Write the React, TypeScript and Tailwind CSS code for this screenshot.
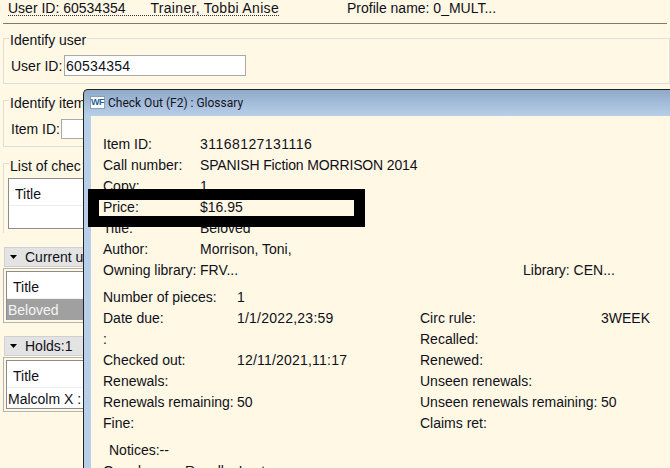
const Row = ({ a, b, w = "w-[97px]", bc = "" }: { a: string; b?: string; w?: string; bc?: string }) => (
  <div className="flex h-[21px] items-center whitespace-nowrap">
    <span className={`${w} shrink-0`}>{a}</span>
    <span className={bc}>{b}</span>
  </div>
);

const Caret = () => (
  <svg width="8" height="4" viewBox="0 0 8 4" className="ml-[5px] mr-[7px] shrink-0">
    <path d="M0 0h7L3.5 4z" fill="#000" />
  </svg>
);

const Section = ({ title, row, selected, mt }: { title: string; row: string; selected?: boolean; mt: string }) => (
  <div className={`${mt} w-[90px]`}>
    <div className="ml-[1px] flex h-[20px] items-center border border-[#d0d0d0] bg-[#e3e3e3] whitespace-nowrap overflow-hidden">
      <Caret />
      <span>{title}</span>
    </div>
    <div className="mt-[1px] h-[55px] border border-[#b4b4b4] p-[2px]">
      <div className="h-full border border-[#8c8c8c] bg-white">
        <div className="flex h-[27px] items-center border-b border-[#eeeeee] pl-[6px] pt-[3px]">Title</div>
        <div className={`flex h-[21px] items-center whitespace-nowrap pl-[1px] ${selected ? "bg-[#a0a0a0] text-[#f4f4f4]" : ""}`}>{row}</div>
      </div>
    </div>
  </div>
);

export default function App() {
  return (
    <div className="relative h-[468px] w-[670px] overflow-hidden bg-[#fff8e5] text-[14px] leading-none text-[#101018] font-['Liberation_Sans',Arial,sans-serif]">
      <div className="mx-[3px] flex h-[24px] items-start border-b border-[#7f7a70] pl-[5px] pt-[1px]">
        <div className="flex h-[15px] w-[271px] items-center border-b border-dotted border-[#333] whitespace-nowrap">
          <span className="w-[143px]">User ID: 60534354</span>
          <span className="tracking-[0.32px]">Trainer, Tobbi Anise</span>
        </div>
        <span className="ml-[68px] whitespace-nowrap">Profile name: 0_MULT...</span>
      </div>

      <div className="pl-[3px]">
        <fieldset className="relative mt-[14px] h-[46px] border border-[#e0dcd8]">
          <legend className="sr-only">Identify user</legend>
          <span className="absolute left-[5px] top-[-6px] bg-[#fff8e5] px-[1px]">Identify user</span>
          <div className="flex items-center pl-[7px] pt-[16px]">
            <span className="w-[53px]">User ID:</span>
            <div className="flex h-[21px] w-[182px] items-center border border-[#a9a9a9] bg-white pl-[1px] tracking-[0.25px]">60534354</div>
          </div>
        </fieldset>

        <fieldset className="relative mt-[16px] h-[47px] border border-[#e0dcd8]">
          <legend className="sr-only">Identify item</legend>
          <span className="absolute left-[5px] top-[-5px] bg-[#fff8e5] px-[1px] whitespace-nowrap">Identify item</span>
          <div className="flex items-center pl-[7px] pt-[18px]">
            <span className="w-[50px]">Item ID:</span>
            <div className="h-[20px] w-[60px] border border-[#a9a9a9] bg-white" />
          </div>
        </fieldset>

        <fieldset className="relative mt-[16px] h-[70px] w-[90px] border-l border-t border-[#e0dcd8]">
          <legend className="sr-only">List of checkouts</legend>
          <span className="absolute left-[5px] top-[-5px] bg-[#fff8e5] px-[1px] whitespace-nowrap">List of chec</span>
          <div className="ml-[4px] mt-[14px] h-[51px] border border-[#8c8c8c] bg-white">
            <div className="flex h-[27px] items-center border-b border-[#eeeeee] pl-[6px] pt-[3px]">Title</div>
          </div>
        </fieldset>

        <Section mt="mt-[14px]" title="Current u" row="Beloved" selected />
        <Section mt="mt-[13px]" title="Holds:1" row="Malcolm X : " />
      </div>

      <div className="absolute left-[83px] top-[89px] h-[400px] w-[600px] rounded-tl-[5px] border-l border-t border-[#222] bg-[linear-gradient(#8fa9c9_0px,#b8cfe9_26px)] pl-[7px] pt-[26px]">
        <div className="absolute left-[6px] top-[6px] flex h-[13px] w-[15px] items-center justify-center border border-[#8aa0b8] bg-white text-[9px] font-bold tracking-[-0.5px] text-[#1f5f98]">WF</div>
        <div className="absolute left-[24px] top-[6px] whitespace-nowrap text-[12px] leading-[15px] font-['Roboto',sans-serif] text-[#14141c]">Check Out (F2) : Glossary</div>

        <div className="h-full bg-[#fff8e5] pl-[12px] pt-[17px]">
          <Row a="Item ID:" b="31168127131116" bc="tracking-[0.45px]" />
          <Row a="Call number:" b="SPANISH Fiction MORRISON 2014" bc="tracking-[-0.14px]" />
          <Row a="Copy:" b="1" />
          <Row a="Price:" b="$16.95" />
          <Row a="Title:" b="Beloved" />
          <Row a="Author:" b="Morrison, Toni," />
          <div className="flex h-[21px] items-center whitespace-nowrap">
            <span className="w-[97px]">Owning library:</span>
            <span className="w-[323px]">FRV...</span>
            <span>Library: CEN...</span>
          </div>

          <div className="mt-[6px] flex">
            <div className="w-[317px]">
              <Row a="Number of pieces:" b="1" w="w-[134px]" />
              <Row a="Date due:" b="1/1/2022,23:59" w="w-[134px]" bc="tracking-[0.22px]" />
              <Row a=":" w="w-[134px]" />
              <Row a="Checked out:" b="12/11/2021,11:17" w="w-[134px]" bc="tracking-[0.2px]" />
              <Row a="Renewals:" w="w-[134px]" />
              <Row a="Renewals remaining:" b="50" w="w-[134px]" />
              <Row a="Fine:" w="w-[134px]" />
            </div>
            <div>
              <div className="h-[21px]" />
              <Row a="Circ rule:" b="3WEEK" w="w-[181px]" />
              <Row a="Recalled:" w="w-[181px]" />
              <Row a="Renewed:" w="w-[181px]" />
              <Row a="Unseen renewals:" w="w-[181px]" />
              <Row a="Unseen renewals remaining:" b="50" w="w-[181px]" />
              <Row a="Claims ret:" w="w-[181px]" />
            </div>
          </div>

          <div className="mt-[6px] flex h-[21px] items-center pl-[6px]">Notices:--</div>
          <div className="flex h-[21px] items-center whitespace-nowrap">
            <span className="w-[82px]">Overdues:</span>
            <span>Recalls: Lost:</span>
          </div>
        </div>
      </div>

      <div className="absolute left-[88px] top-[189px] h-[38px] w-[277px] border-[11px] border-black" />
    </div>
  );
}
